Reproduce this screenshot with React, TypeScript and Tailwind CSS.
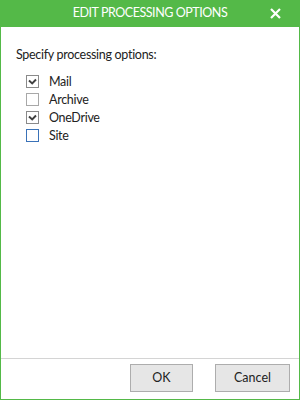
import React from "react";

const font = { fontFamily: 'Lato, "Noto Sans", sans-serif' };

function Box({ checked, blue }: { checked?: boolean; blue?: boolean }) {
  return (
    <div
      className={`w-[13px] h-[13px] border flex items-center justify-center bg-white shrink-0 ${
        blue ? "border-[#3a72b8]" : checked ? "border-[#8a8a8a]" : "border-[#a8a8a8]"
      }`}
    >
      {checked && (
        <svg width="9" height="7" viewBox="0 0 9 7">
          <path d="M1 2.5 L4.2 5.5 L8 1.5" stroke="#404040" strokeWidth="1.9" fill="none" />
        </svg>
      )}
    </div>
  );
}

export default function App() {
  const items = [
    { label: "Mail", checked: true },
    { label: "Archive", checked: false },
    { label: "OneDrive", checked: true },
    { label: "Site", checked: false, blue: true },
  ];
  return (
    <div className="w-[300px] h-[400px] flex flex-col border border-[#54b948] bg-white text-[12.5px] text-[#222]" style={font}>
      <div className="h-[27px] -mx-px -mt-px bg-[#54b948] flex items-center justify-center relative shrink-0">
        <span className="text-white text-[12.5px] tracking-[-0.45px]">EDIT PROCESSING OPTIONS</span>
        <svg className="absolute left-[270px] top-[8px]" width="11" height="11" viewBox="0 0 11 11">
          <path d="M1 1 L10 10 M10 1 L1 10" stroke="white" strokeWidth="2.2" />
        </svg>
      </div>
      <div className="flex-1 pl-[15px] pt-[20px] tracking-[-0.3px]">
        <div className="leading-[16px]">Specify processing options:</div>
        <div className="flex flex-col mt-[12px] pl-[10px] gap-[5px]">
          {items.map((it) => (
            <div key={it.label} className="flex items-center gap-[10px] h-[13px]">
              <Box checked={it.checked} blue={it.blue} />
              <span className="leading-[13px]">{it.label}</span>
            </div>
          ))}
        </div>
      </div>
      <div className="h-[41px] border-t border-[#d4d4d4] flex items-start justify-end pt-[5px] pr-[9px] gap-[22px] shrink-0">
        <button className="w-[63px] h-[28px] border border-[#adadad] bg-[#e6e6e6] text-[12.5px] text-[#222]">OK</button>
        <button className="w-[75px] h-[28px] border border-[#adadad] bg-[#e6e6e6] text-[12.5px] text-[#222]">Cancel</button>
      </div>
    </div>
  );
}
